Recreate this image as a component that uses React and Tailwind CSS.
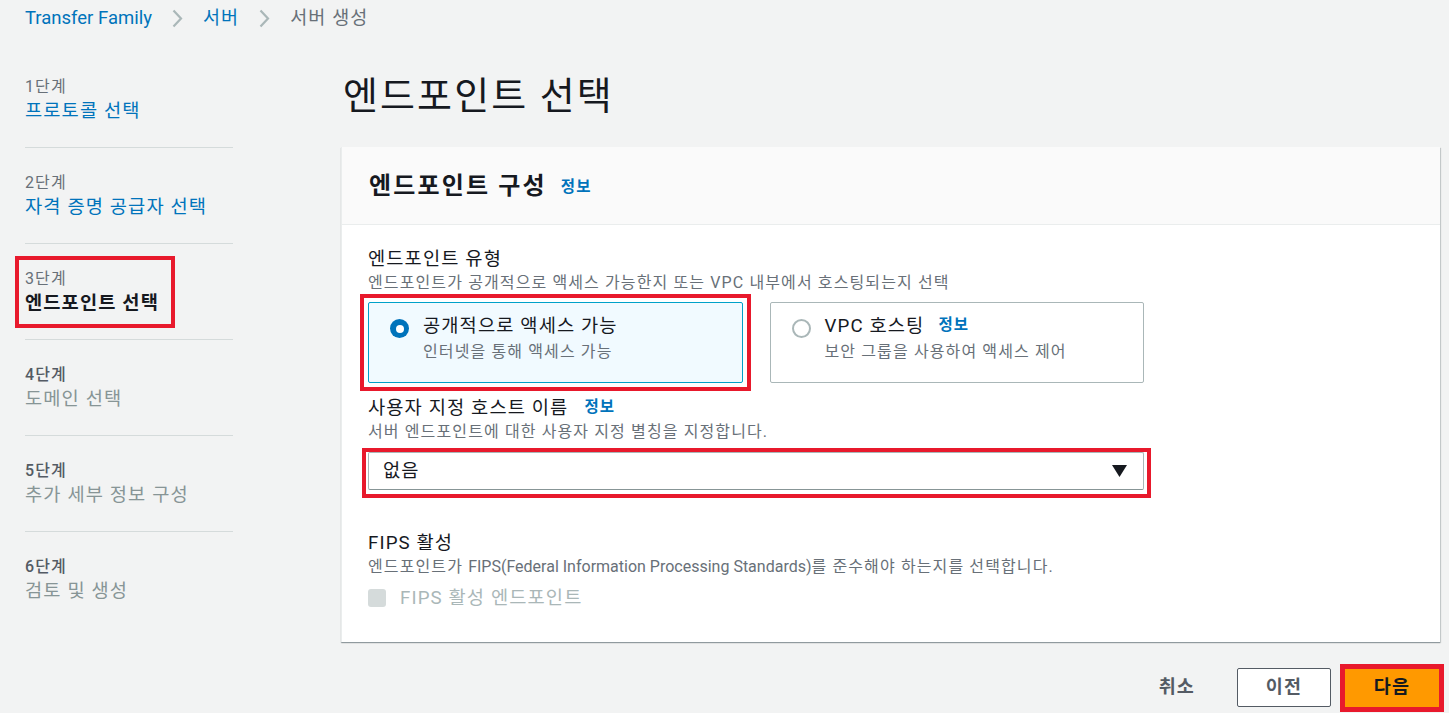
const steps = [
  { label: '1단계', name: '프로토콜 선택', state: 'done' },
  { label: '2단계', name: '자격 증명 공급자 선택', state: 'done' },
  { label: '3단계', name: '엔드포인트 선택', state: 'current' },
  { label: '4단계', name: '도메인 선택', state: 'todo' },
  { label: '5단계', name: '추가 세부 정보 구성', state: 'todo' },
  { label: '6단계', name: '검토 및 생성', state: 'todo' },
];

const Chevron = () => (
  <svg width="11" height="19" viewBox="0 0 11 19" fill="none" className="shrink-0">
    <polyline points="1.5,1.5 9,9.5 1.5,17.5" stroke="#aab7b8" strokeWidth="2.2" />
  </svg>
);

const Info = ({ className = '' }) => (
  <a className={`text-[15.5px] font-bold text-[#0073bb] leading-none ${className}`}>정보</a>
);

const Sidebar = () => (
  <nav className="w-[208px] shrink-0 mt-[18px]">
    {steps.map((s, i) => (
      <div
        key={s.label}
        className={`pt-6 pb-[23px] ${i < steps.length - 1 ? 'border-b border-[#d5dbdb]' : ''}`}
      >
        {s.state === 'current' ? (
          <div className="relative">
            <div className="absolute -left-[10px] -top-[12px] w-[160px] h-[72px] border-[4px] border-[#e8192c]" />
            <div className="text-[16px] leading-[22px] text-[#687078]">{s.label}</div>
            <div className="text-[18.7px] leading-[26px] font-bold text-[#16191f]">{s.name}</div>
          </div>
        ) : (
          <>
            <div
              className={`text-[16px] leading-[22px] ${
                s.state === 'todo' ? 'text-[#545b64] font-medium' : 'text-[#687078]'
              }`}
            >
              {s.label}
            </div>
            <div
              className={`text-[18.7px] leading-[26px] ${
                s.state === 'done' ? 'text-[#0073bb]' : 'text-[#879596]'
              }`}
            >
              {s.name}
            </div>
          </>
        )}
      </div>
    ))}
  </nav>
);

const Tile = ({ selected, title, sub, info }) => (
  <div
    className={`h-[81px] rounded-[2px] border pl-[21px] pr-4 pt-[10px] flex gap-[14px] ${
      selected ? 'bg-[#f1faff] border-[#00a1c9]' : 'bg-white border-[#aab7b8]'
    }`}
  >
    <span
      className={`mt-[6px] w-[19px] h-[19px] rounded-full shrink-0 flex items-center justify-center ${
        selected ? 'bg-[#0073bb]' : 'border-2 border-[#aab7b8] bg-white'
      }`}
    >
      {selected && <span className="w-[8px] h-[8px] rounded-full bg-white" />}
    </span>
    <div>
      <div className="flex items-center gap-[14px] text-[18.7px] leading-[26px] text-[#16191f]">
        {title}
        {info && <Info />}
      </div>
      <div className="text-[16px] leading-[22px] text-[#687078] mt-[2px]">{sub}</div>
    </div>
  </div>
);

export default function App() {
  return (
    <div
      className="min-h-screen bg-[#f2f3f3] text-[#16191f] tracking-[0.07em]"
      style={{ fontFamily: 'Roboto, "Noto Sans CJK KR", sans-serif' }}
    >
      {/* breadcrumb */}
      <div className="h-[34px] pt-[3px] pl-[25px] flex items-center gap-[20px] text-[18.5px]">
        <a className="text-[#0073bb] tracking-normal">Transfer Family</a>
        <Chevron />
        <a className="text-[#0073bb]">서버</a>
        <Chevron />
        <span className="text-[#687078]">서버 생성</span>
      </div>

      <div className="flex pl-[25px]">
        <Sidebar />

        <main className="ml-[108px] w-[1099px]">
          <h1 className="mt-[40px] h-[44px] leading-[44px] pl-[2px] text-[38px] tracking-[0.055em] font-normal">
            엔드포인트 선택
          </h1>

          <section className="mt-[29px] bg-white border-l border-[#eaeded] shadow-[0_1px_1px_0_rgba(0,28,36,0.3),1px_1px_1px_0_rgba(0,28,36,0.15)]">
            <div className="h-[78px] bg-[#fafafa] border-b border-[#eaeded] flex items-center px-[27px] gap-[14px]">
              <h2 className="text-[24px] tracking-[0.09em] font-bold leading-none">엔드포인트 구성</h2>
              <Info className="mt-[4px]" />
            </div>

            <div className="px-[26px] pt-[21px] pb-[31px]">
              <div className="w-[776px]">
                <div className="text-[18.7px] leading-[26px]">엔드포인트 유형</div>
                <div className="text-[16px] leading-[22px] text-[#687078]">
                  엔드포인트가 공개적으로 액세스 가능한지 또는 VPC 내부에서 호스팅되는지 선택
                </div>
                <div className="mt-[8px] grid grid-cols-2 gap-[27px]">
                  <div className="-m-[8px] p-[4px] border-[4px] border-[#e8192c]">
                    <Tile selected title="공개적으로 액세스 가능" sub="인터넷을 통해 액세스 가능" />
                  </div>
                  <Tile title="VPC 호스팅" sub="보안 그룹을 사용하여 액세스 제어" info />
                </div>

                <div className="mt-[12px] flex items-center gap-[16px] text-[18.7px] leading-[26px]">
                  사용자 지정 호스트 이름
                  <Info />
                </div>
                <div className="text-[16px] leading-[22px] text-[#687078]">
                  서버 엔드포인트에 대한 사용자 지정 별칭을 지정합니다.
                </div>
                <div className="mt-[5px] -ml-[6px] -mr-[7px] pl-[2px] pr-[3px] pb-[4px] border-[4px] border-[#e8192c]">
                  <div className="h-[38px] bg-white border border-[#aab7b8] border-b-[#879596] rounded-[2px] flex items-center justify-between pl-[14px] pr-[16px]">
                    <span className="text-[18.7px]">없음</span>
                    <svg width="15" height="12" viewBox="0 0 15 12">
                      <polygon points="0,0 15,0 7.5,12" fill="#16191f" />
                    </svg>
                  </div>
                </div>

                <div className="mt-[32px] text-[18.7px] leading-[26px]">FIPS 활성</div>
                <div className="text-[16px] leading-[22px] text-[#687078]">
                  엔드포인트가{' '}
                  <span className="tracking-normal">FIPS(Federal Information Processing Standards)</span>를
                  준수해야 하는지를 선택합니다.
                </div>
                <label className="mt-[7px] flex items-center gap-[14px]">
                  <span className="w-[18px] h-[18px] rounded-[3px] bg-[#d5dbdb]" />
                  <span className="text-[18.7px] leading-[26px] text-[#aab7b8]">FIPS 활성 엔드포인트</span>
                </label>
              </div>
            </div>
          </section>

          <div className="mt-[26px] flex items-center justify-end">
            <button className="px-[20px] h-[39px] text-[18.5px] font-bold text-[#545b64]">취소</button>
            <button className="ml-[22px] w-[94px] h-[39px] rounded-[2px] border border-[#545b64] bg-white text-[18.5px] font-bold text-[#545b64]">
              이전
            </button>
            <div className="ml-[9px] -my-[5px] -mr-[4px] border-[5px] border-[#e8192c]">
              <button className="block w-[94px] h-[38px] bg-[#ff9900] text-[18.5px] font-bold text-[#16191f]">
                다음
              </button>
            </div>
          </div>
        </main>
      </div>
    </div>
  );
}
